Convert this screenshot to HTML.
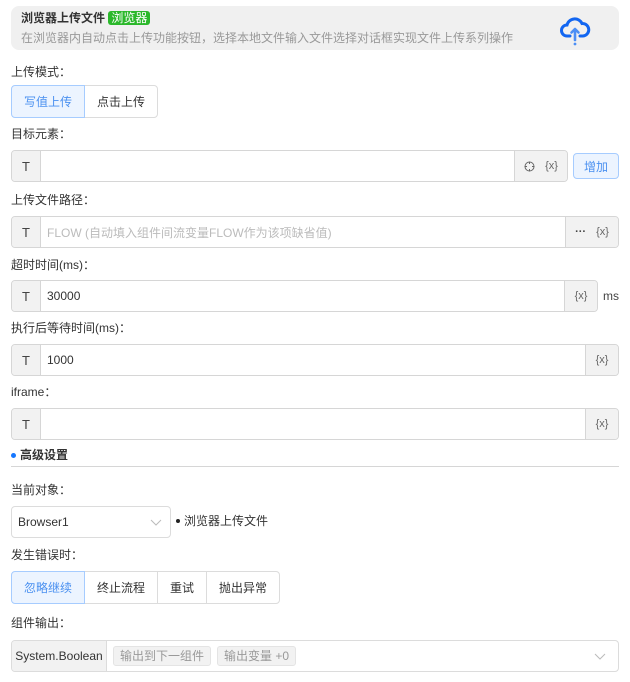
<!DOCTYPE html>
<html><head><meta charset="utf-8"><style>
*{box-sizing:border-box;margin:0;padding:0}
body{width:630px;height:682px;background:#fff;font-family:"Liberation Sans","Noto Sans CJK SC",sans-serif;font-size:12px;color:#333;position:relative;overflow:hidden}
.a{position:absolute}
.lbl{position:absolute;left:11px;font-size:12px;color:#333;line-height:14px}
.inp{position:absolute;left:11px;height:32px;border:1px solid #d6d6d6;border-radius:4px;display:flex;overflow:hidden;background:#fff}
.pre{width:29px;background:#f2f2f2;border-right:1px solid #d6d6d6;display:flex;align-items:center;justify-content:center;font-size:13px;color:#444}
.mid{flex:1;display:flex;align-items:center;padding-left:6px;font-size:12px;color:#333}
.suf{background:#f2f2f2;border-left:1px solid #d6d6d6;display:flex;align-items:center;justify-content:center;gap:10px;font-size:11px;color:#666}
.bg{position:absolute;display:flex;height:33px}
.bg div{border:1px solid #dcdcdc;margin-left:-1px;display:flex;align-items:center;justify-content:center;font-size:12px;color:#333;background:#fff}
.bg div:first-child{margin-left:0;border-radius:4px 0 0 4px;background:#ecf4ff;border-color:#a6ccff;color:#4a90f0;position:relative;z-index:1}
.bg div:last-child{border-radius:0 4px 4px 0}
</style></head><body>
<div class="a" style="left:11px;top:6px;width:608px;height:44px;background:#f0f0f0;border-radius:8px"></div>
<div class="a" style="left:21px;top:11px;font-size:12px;font-weight:bold;color:#333;line-height:14px">浏览器上传文件 <span style="background:#2bb82b;color:#fff;font-weight:normal;border-radius:3px;padding:0 3px;font-size:12px">浏览器</span></div>
<div class="a" style="left:21px;top:31px;font-size:12px;color:#999;line-height:14px">在浏览器内自动点击上传功能按钮，选择本地文件输入文件选择对话框实现文件上传系列操作</div>
<svg class="a" style="left:559px;top:14px" width="32" height="32" viewBox="0 0 32 32"><path d="M11 22 H8 A5.5 5.5 0 0 1 8 11 A8 8 0 0 1 23 9.5 A6 6 0 0 1 24 22 H21" fill="none" stroke="#1266f1" stroke-width="3" stroke-linecap="round"/><path d="M16 26 V15 M12.5 18.5 L16 15 L19.5 18.5" fill="none" stroke="#4b8ef5" stroke-width="2.6" stroke-linecap="round" stroke-linejoin="round"/><circle cx="16" cy="30" r="1.4" fill="#4b8ef5"/></svg>

<div class="lbl" style="top:65px">上传模式：</div>
<div class="bg" style="left:11px;top:85px"><div style="width:74px">写值上传</div><div style="width:74px">点击上传</div></div>

<div class="lbl" style="top:127px">目标元素：</div>
<div class="inp" style="top:150px;width:557px"><div class="pre">T</div><div class="mid"></div><div class="suf" style="width:53px"><svg width="11" height="11" viewBox="0 0 11 11"><circle cx="5.5" cy="5.5" r="4.5" fill="none" stroke="#666"/><path d="M5.5 0.5V3M5.5 8V10.5M0.5 5.5H3M8 5.5H10.5" stroke="#666"/></svg><span>{x}</span></div></div>
<div class="a" style="left:573px;top:153px;width:46px;height:26px;border:1px solid #a6ccff;background:#ecf4ff;color:#4a90f0;border-radius:4px;display:flex;align-items:center;justify-content:center">增加</div>

<div class="lbl" style="top:193px">上传文件路径：</div>
<div class="inp" style="top:216px;width:608px"><div class="pre">T</div><div class="mid" style="color:#bbb">FLOW (自动填入组件间流变量FLOW作为该项缺省值)</div><div class="suf" style="width:53px"><span style="font-weight:bold;color:#444">···</span><span>{x}</span></div></div>

<div class="lbl" style="top:258px">超时时间(ms)：</div>
<div class="inp" style="top:280px;width:587px"><div class="pre">T</div><div class="mid">30000</div><div class="suf" style="width:33px">{x}</div></div>
<div class="a" style="left:603px;top:289px;font-size:12px;color:#444">ms</div>

<div class="lbl" style="top:321px">执行后等待时间(ms)：</div>
<div class="inp" style="top:344px;width:608px"><div class="pre">T</div><div class="mid">1000</div><div class="suf" style="width:33px">{x}</div></div>

<div class="lbl" style="top:385px">iframe：</div>
<div class="inp" style="top:408px;width:608px"><div class="pre">T</div><div class="mid"></div><div class="suf" style="width:33px">{x}</div></div>

<div class="a" style="left:11px;top:453px;width:5px;height:5px;border-radius:50%;background:#1677ff"></div>
<div class="a" style="left:20px;top:448px;font-weight:bold;font-size:12px;line-height:14px">高级设置</div>
<div class="a" style="left:11px;top:466px;width:608px;height:1px;background:#d6d6d6"></div>

<div class="lbl" style="top:483px">当前对象：</div>
<div class="a" style="left:11px;top:506px;width:160px;height:32px;border:1px solid #dcdcdc;border-radius:4px;display:flex;align-items:center;padding-left:6px;font-size:12px;color:#333">Browser1<svg style="position:absolute;right:8px;top:12px" width="12" height="8"><path d="M1 1 L6 6 L11 1" fill="none" stroke="#bbb"/></svg></div>
<div class="a" style="left:176px;top:519px;width:4px;height:4px;border-radius:50%;background:#222"></div>
<div class="a" style="left:184px;top:514px;font-size:12px;line-height:14px">浏览器上传文件</div>

<div class="lbl" style="top:548px">发生错误时：</div>
<div class="bg" style="left:11px;top:571px"><div style="width:74px">忽略继续</div><div style="width:74px">终止流程</div><div style="width:50px">重试</div><div style="width:74px">抛出异常</div></div>

<div class="lbl" style="top:616px">组件输出：</div>
<div class="a" style="left:11px;top:640px;width:608px;height:32px;border:1px solid #dcdcdc;border-radius:4px;display:flex;overflow:hidden">
<div style="width:95px;background:#f2f2f2;border-right:1px solid #dcdcdc;display:flex;align-items:center;justify-content:center;font-size:12px;color:#333">System.Boolean</div>
<div style="margin:5px 0 0 6px;height:20px;padding:0 6px;background:#f2f2f2;border:1px solid #e4e4e4;border-radius:3px;color:#999;font-size:12px;line-height:18px">输出到下一组件</div>
<div style="margin:5px 0 0 6px;height:20px;padding:0 6px;background:#f2f2f2;border:1px solid #e4e4e4;border-radius:3px;color:#999;font-size:12px;line-height:18px">输出变量 +0</div>
<svg style="position:absolute;right:12px;top:12px" width="12" height="8"><path d="M1 1 L6 6 L11 1" fill="none" stroke="#bbb"/></svg>
</div>
</body></html>
